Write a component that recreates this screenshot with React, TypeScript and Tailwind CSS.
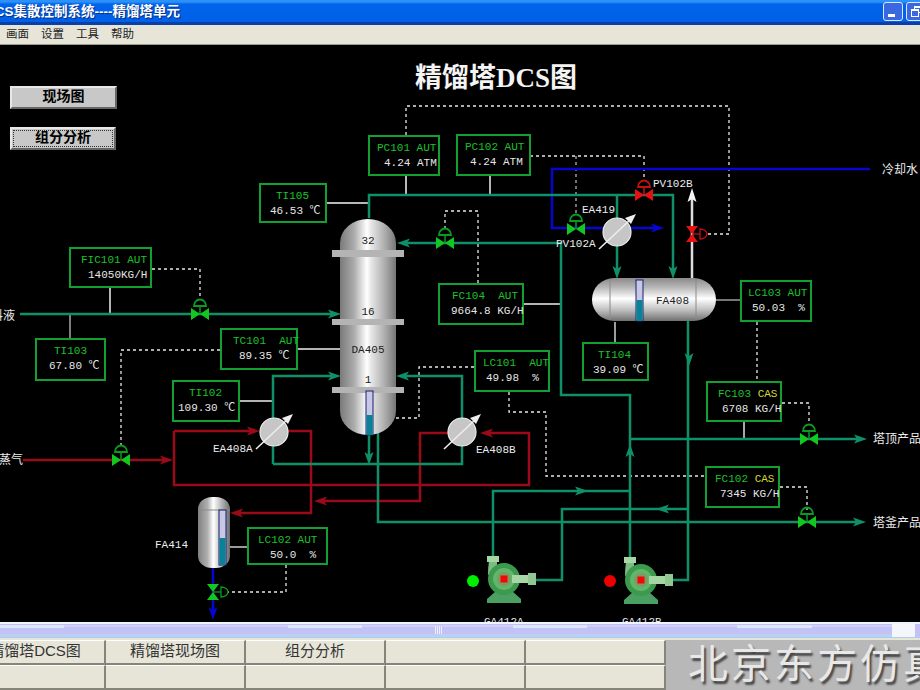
import React from "react";

const PIPE = "#0e9068";
const RED = "#9a0a18";
const BLUE = "#0606d0";

type P = [number, number];
const pts = (a: P[]) => a.map((p) => p.join(",")).join(" ");

function Line({ d, c = PIPE, w = 2.5, dash }: { d: string; c?: string; w?: number; dash?: string }) {
  return <polyline points={d} fill="none" stroke={c} strokeWidth={w} strokeDasharray={dash} />;
}

function Dash({ d, c = "#e8e8e8" }: { d: string; c?: string }) {
  return <polyline points={d} fill="none" stroke={c} strokeWidth={1.3} strokeDasharray="3 3" />;
}

function Arrow({ x, y, dir, c = PIPE, l = 13, h = 4.5 }: { x: number; y: number; dir: "r" | "l" | "u" | "d"; c?: string; l?: number; h?: number }) {
  const p: P[] =
    dir === "r"
      ? [[x, y], [x - l, y - h], [x - l + 3, y], [x - l, y + h]]
      : dir === "l"
        ? [[x, y], [x + l, y - h], [x + l - 3, y], [x + l, y + h]]
        : dir === "u"
          ? [[x, y], [x - h, y + l], [x, y + l - 3], [x + h, y + l]]
          : [[x, y], [x - h, y - l], [x, y - l + 3], [x + h, y - l]];
  return <polygon points={pts(p)} fill={c} />;
}

function Valve({ x, y, c = "#12c820", d = "#0a9a22" }: { x: number; y: number; c?: string; d?: string }) {
  return (
    <g>
      <polygon points={pts([[x - 9, y - 6], [x, y], [x - 9, y + 6]])} fill={c} />
      <polygon points={pts([[x + 9, y - 6], [x, y], [x + 9, y + 6]])} fill={c} />
      <line x1={x} y1={y} x2={x} y2={y - 8} stroke={d} strokeWidth={1.5} />
      <path d={`M${x - 6} ${y - 8} A6 6.5 0 0 1 ${x + 6} ${y - 8} Z`} fill="none" stroke={d} strokeWidth={1.8} />
    </g>
  );
}

function VValve({ x, y, c = "#12c820", d = "#0a9a22" }: { x: number; y: number; c?: string; d?: string }) {
  return (
    <g>
      <polygon points={pts([[x - 6, y - 8], [x + 6, y - 8], [x, y]])} fill={c} />
      <polygon points={pts([[x - 6, y + 8], [x + 6, y + 8], [x, y]])} fill={c} />
      <line x1={x} y1={y} x2={x + 8} y2={y} stroke={d} strokeWidth={1.3} />
      <path d={`M${x + 8} ${y - 5} A7 5 0 0 1 ${x + 8} ${y + 5} Z`} fill="none" stroke={d} strokeWidth={1.3} />
    </g>
  );
}

function Exchanger({ x, y }: { x: number; y: number }) {
  return (
    <g>
      <circle cx={x} cy={y} r={14} fill="#c6c6c6" stroke="#ececec" strokeWidth={1.2} />
      <line x1={x - 18} y1={y + 17} x2={x + 14} y2={y - 13} stroke="#eeeeee" strokeWidth={1.6} />
      <polygon points={pts([[x + 19, y - 18], [x + 8, y - 14], [x + 14, y - 8]])} fill="#eeeeee" />
    </g>
  );
}

function Pump({ x, y }: { x: number; y: number }) {
  return (
    <g transform={`translate(${x} ${y})`}>
      <polygon points={pts([[-8, 12], [8, 12], [17, 20], [17, 24], [-17, 24], [-17, 20]])} fill="#4a9f62" />
      <path d="M-16 -4 Q-16 -12 -15 -18 L-7 -18 L-7 -8 Z" fill="#7dbb82" />
      <circle r={16} fill="#3c9a4c" />
      <circle r={11} fill="#62b56c" />
      <circle r={7} fill="#7f9a5e" />
      <rect x={8} y={-4} width={18} height={8} fill="#a6d6a4" />
      <rect x={24} y={-6} width={8} height={12} fill="#8fc892" />
      <rect x={-17} y={-23} width={12} height={6} fill="#a6d6a4" />
      <rect x={-3.5} y={-3.5} width={7} height={7} fill="#f00808" />
    </g>
  );
}

function Label({ x, y, t, c = "#ececec", a = "start", big = false }: { x: number; y: number; t: string; c?: string; a?: "start" | "middle"; big?: boolean }) {
  return (
    <text x={x} y={y} fill={c} textAnchor={a} className={big ? "text-[12px]" : "text-[11px]"}>
      {t}
    </text>
  );
}

function Gauge({ x, y, w, h, level }: { x: number; y: number; w: number; h: number; level: number }) {
  return (
    <g>
      <rect x={x} y={y} width={w} height={h} fill="#c8c8e6" stroke="#14206e" strokeWidth={1} />
      <rect x={x + 0.5} y={level} width={w - 1} height={y + h - level} fill="#0a8296" />
    </g>
  );
}

const boxes = [
  { pos: "left-[368px] top-[90px] w-[72px] h-[41px]", a: "PC101 AUT", b: "4.24 ATM", pa: "pl-[7px]", pb: "pl-[14px]" },
  { pos: "left-[456px] top-[89px] w-[75px] h-[42px]", a: "PC102 AUT", b: "4.24 ATM", pa: "pl-[7px]", pb: "pl-[12px]" },
  { pos: "left-[259px] top-[138px] w-[68px] h-[40px]", a: "TI105", b: "46.53 ℃", pa: "pl-[15px]", pb: "pl-[9px]" },
  { pos: "left-[69px] top-[202px] w-[83px] h-[41px]", a: "FIC101 AUT", b: "14050KG/H", pa: "pl-[10px]", pb: "pl-[17px]" },
  { pos: "left-[35px] top-[293px] w-[71px] h-[43px]", a: "TI103", b: "67.80 ℃", pa: "pl-[17px]", pb: "pl-[12px]" },
  { pos: "left-[220px] top-[283px] w-[78px] h-[42px]", a: "TC101  AUT", b: "89.35 ℃", pa: "pl-[11px]", pb: "pl-[17px]" },
  { pos: "left-[172px] top-[335px] w-[68px] h-[42px]", a: "TI102", b: "109.30 ℃", pa: "pl-[15px]", pb: "pl-[4px]" },
  { pos: "left-[438px] top-[238px] w-[86px] h-[42px]", a: "FC104  AUT", b: "9664.8 KG/H", pa: "pl-[12px]", pb: "pl-[11px]" },
  { pos: "left-[474px] top-[305px] w-[76px] h-[42px]", a: "LC101  AUT", b: "49.98  %", pa: "pl-[7px]", pb: "pl-[10px]" },
  { pos: "left-[582px] top-[297px] w-[67px] h-[39px]", a: "TI104", b: "39.09 ℃", pa: "pl-[14px]", pb: "pl-[9px]" },
  { pos: "left-[740px] top-[235px] w-[72px] h-[42px]", a: "LC103 AUT", b: "50.03  %", pa: "pl-[6px]", pb: "pl-[10px]" },
  { pos: "left-[706px] top-[336px] w-[76px] h-[41px]", a: "FC103", y: "CAS", b: "6708 KG/H", pa: "pl-[10px]", pb: "pl-[14px]" },
  { pos: "left-[705px] top-[421px] w-[75px] h-[42px]", a: "FC102", y: "CAS", b: "7345 KG/H", pa: "pl-[8px]", pb: "pl-[13px]" },
  { pos: "left-[247px] top-[482px] w-[81px] h-[38px]", a: "LC102 AUT", b: "50.0  %", pa: "pl-[9px]", pb: "pl-[21px]" },
];

const tabs = ["精馏塔DCS图", "精馏塔现场图", "组分分析", "", ""];

function Cell({ t }: { t?: string }) {
  return (
    <div className="flex h-[25px] items-center justify-center border-t border-t-white border-r-2 border-r-[#85857a] border-b-2 border-b-[#85857a] bg-[#e6e5d8] pb-[2px] text-[15px] text-[#333333]">
      {t}
    </div>
  );
}

export default function App() {
  return (
    <div className="flex h-[690px] w-[920px] flex-col overflow-hidden bg-black font-['Liberation_Mono','Noto_Sans_CJK_SC',monospace]">
      {/* title bar */}
      <div className="flex h-[25px] shrink-0 items-start justify-between overflow-hidden border-b-[3px] border-b-[#0a3fa8] bg-[linear-gradient(#2c92f8_0,#2c92f8_2px,#0164ec_4px,#0060e6_100%)]">
        <span className="-ml-[15px] mt-[3px] whitespace-nowrap font-['Liberation_Sans','Noto_Sans_CJK_SC',sans-serif] text-[13.5px] font-bold leading-[18px] text-white [text-shadow:1px_1px_1px_#0a2a80]">
          DCS集散控制系统----精馏塔单元
        </span>
        <div className="-mr-[6px] mt-[2px] flex gap-[3px]">
          <div className="relative h-[19px] w-[20px] rounded-[3px] border border-[#dce8ff] bg-[#3a68e0]">
            <span className="absolute bottom-[3px] left-[4px] h-[3px] w-[7px] bg-white" />
          </div>
          <div className="relative h-[19px] w-[20px] rounded-[3px] border border-[#dce8ff] bg-[#3a68e0]">
            <span className="absolute left-[7px] top-[3px] h-[7px] w-[8px] border border-t-2 border-white" />
            <span className="absolute left-[4px] top-[6px] h-[8px] w-[8px] border border-t-2 border-white bg-[#3a68e0]" />
          </div>
        </div>
      </div>

      {/* menu */}
      <div className="flex h-[20px] shrink-0 items-center gap-[12px] border-b border-b-[#9c9b8e] bg-[#e6e5d8] pl-[6px] font-['Liberation_Sans','Noto_Sans_CJK_SC',sans-serif] text-[11.5px] text-[#222222]">
        <span>画面</span>
        <span>设置</span>
        <span>工具</span>
        <span>帮助</span>
      </div>

      {/* canvas */}
      <div className="relative flex-1 overflow-hidden bg-black">
        <svg width="920" height="577" viewBox="0 45 920 577" className="block">
          <defs>
            <linearGradient id="col" x1="0" x2="1" y1="0" y2="0">
              <stop offset="0" stopColor="#7a7a7a" />
              <stop offset="0.25" stopColor="#ababab" />
              <stop offset="0.48" stopColor="#ffffff" />
              <stop offset="0.55" stopColor="#e8e8e8" />
              <stop offset="0.8" stopColor="#adadad" />
              <stop offset="1" stopColor="#767676" />
            </linearGradient>
            <linearGradient id="drum" x1="0" x2="0" y1="0" y2="1">
              <stop offset="0" stopColor="#8a8a8a" />
              <stop offset="0.22" stopColor="#b8b8b8" />
              <stop offset="0.48" stopColor="#ffffff" />
              <stop offset="0.75" stopColor="#bdbdbd" />
              <stop offset="1" stopColor="#707070" />
            </linearGradient>
            <linearGradient id="small" x1="0" x2="1" y1="0" y2="0">
              <stop offset="0" stopColor="#808080" />
              <stop offset="0.3" stopColor="#b0b0b0" />
              <stop offset="0.48" stopColor="#ffffff" />
              <stop offset="0.7" stopColor="#c0c0c0" />
              <stop offset="1" stopColor="#6c6c6c" />
            </linearGradient>
          </defs>

          {/* signal lines */}
          <Dash d="406,135 406,106 729,106 729,234 707,234" />
          <Dash d="530,156 644,156 644,180" />
          <Dash d="576,156 576,215" c="#b0b0b0" />
          <Dash d="478,283 478,211 445,211 445,228" />
          <Dash d="152,269 200,269 200,298" />
          <Dash d="220,350 121,350 121,445" />
          <Dash d="474,367 419,367 419,418 375,418" />
          <Dash d="509,392 509,412 546,412 546,476 705,476" />
          <Dash d="757,322 757,381" />
          <Dash d="782,403 809,403 809,425" />
          <Dash d="780,487 807,487 807,510" />
          <Dash d="286,565 286,592 228,592" />

          {/* measurement lines */}
          <Line d="406,176 406,195" c="#b8b8b8" w={2} />
          <Line d="490,176 490,195" c="#f0f0f0" w={1.5} />
          <Line d="327,203 369,203" c="#b8b8b8" w={2} />
          <Line d="110,287 110,314" c="#f0f0f0" w={1.5} />
          <Line d="70,314 70,338" c="#a8a8a8" w={1.5} />
          <Line d="298,349 340,349" c="#f0f0f0" w={1.3} />
          <Line d="240,401 273,401" c="#f0f0f0" w={1.3} />
          <Line d="524,304 560,304" c="#f0f0f0" w={1.3} />
          <Line d="615,322 615,342" c="#f0f0f0" w={1.3} />
          <Line d="716,300 740,300" c="#b8b8b8" w={1.3} />
          <Line d="744,421 744,439" c="#a8a8a8" w={2} />
          <Line d="229,547 247,547" c="#f0f0f0" w={1.3} />

          {/* blue */}
          <Line d="870,169 552,169 552,228 655,228" c={BLUE} />
          <Arrow x={664} y={228} dir="r" c={BLUE} />
          <Line d="213,568 213,612" c={BLUE} />
          <Arrow x={213} y={620} dir="d" c={BLUE} />

          {/* red */}
          <Line d="23,460 165,460" c={RED} />
          <Arrow x={173} y={460} dir="r" c={RED} />
          <Line d="174,431 252,431" c={RED} />
          <Arrow x={260} y={431} dir="r" c={RED} />
          <Line d="174,431 174,485 529,485 529,433 488,433" c={RED} />
          <Arrow x={480} y={433} dir="l" c={RED} />
          <Line d="288,431 311,431 311,513 238,513" c={RED} />
          <Arrow x={230} y={513} dir="l" c={RED} />
          <Line d="448,433 420,433 420,501 322,501" c={RED} />
          <Arrow x={314} y={501} dir="l" c={RED} />

          {/* green pipes */}
          <Line d="369,218 369,195 673,195 673,270" />
          <Arrow x={673} y={279} dir="d" />
          <Line d="617,195 617,270" />
          <Arrow x={617} y={279} dir="d" />
          <Line d="405,243 561,243 561,395 630,395 630,557" />
          <Arrow x={397} y={243} dir="l" />
          <Arrow x={630} y={444} dir="u" />
          <Line d="688,320 688,580 672,580" />
          <Arrow x={689} y={366} dir="d" />
          <Line d="688,509 562,509 562,580 535,580" />
          <Arrow x={656} y={509} dir="l" />
          <Line d="493,557 493,491 630,491" />
          <Arrow x={588} y={491} dir="r" />
          <Line d="378,430 378,522 860,522" />
          <Arrow x={866} y={522} dir="r" />
          <Line d="630,439 860,439" />
          <Arrow x={867} y={439} dir="r" />
          <Line d="369,430 369,457" />
          <Arrow x={369} y={465} dir="d" />
          <Line d="273,464 462,464 462,376 405,376" />
          <Arrow x={396} y={376} dir="l" />
          <Line d="273,464 273,376 332,376" />
          <Arrow x={341} y={376} dir="r" />
          <Line d="20,314 332,314" />
          <Arrow x={341} y={314} dir="r" />

          {/* white outlet */}
          <Line d="692,278 692,198" c="#dcdcdc" />
          <Arrow x={692} y={188} dir="u" c="#f4f4f4" l={14} />

          {/* column */}
          <rect x={340} y={219} width={56} height={216} rx={28} ry={24} fill="url(#col)" />
          <rect x={332} y={250} width={72} height={7} fill="#b4b4b4" />
          <rect x={332} y={319} width={72} height={6} fill="#b4b4b4" />
          <rect x={332} y={387} width={72} height={6} fill="#b4b4b4" />
          <Gauge x={366} y={391} w={7} h={44} level={415} />
          <Label x={368} y={244} t="32" c="#222222" a="middle" />
          <Label x={368} y={315} t="16" c="#222222" a="middle" />
          <Label x={368} y={353} t="DA405" c="#222222" a="middle" />
          <Label x={368} y={383} t="1" c="#222222" a="middle" />

          {/* FA408 */}
          <rect x={592} y={278} width={124} height={43} rx={22} ry={21.5} fill="url(#drum)" />
          <line x1={610} y1={279} x2={610} y2={320} stroke="#8a8a8a" />
          <line x1={696} y1={279} x2={696} y2={320} stroke="#8a8a8a" />
          <Gauge x={636} y={280} w={7} h={41} level={300} />
          <Label x={656} y={304} t="FA408" c="#222222" />

          {/* FA414 */}
          <rect x={198} y={497} width={32} height={71} rx={14} ry={12} fill="url(#small)" />
          <line x1={198} y1={510} x2={230} y2={510} stroke="#8a8a8a" />
          <Gauge x={219} y={510} w={7} h={55} level={538} />

          <Exchanger x={617} y={232} />
          <Exchanger x={274} y={432} />
          <Exchanger x={462} y={432} />

          <Valve x={445} y={243} />
          <Valve x={200} y={314} />
          <Valve x={121} y={460} />
          <Valve x={809} y={439} />
          <Valve x={807} y={522} />
          <Valve x={576} y={229} />
          <Valve x={644} y={195} c="#e81010" d="#c01010" />
          <VValve x={692} y={234} c="#e81010" d="#c01010" />
          <VValve x={213} y={592} />

          <Pump x={504} y={579} />
          <Pump x={641} y={580} />
          <circle cx={473} cy={581} r={6} fill="#00ee00" />
          <circle cx={610} cy={581} r={6} fill="#ee0000" />

          {/* labels */}
          <text x={415} y={87} fill="#f4f4f4" className="font-['Liberation_Serif','Noto_Sans_CJK_SC',serif] text-[27px] font-bold">
            精馏塔DCS图
          </text>
          <Label x={155} y={548} t="FA414" />
          <Label x={213} y={452} t="EA408A" />
          <Label x={476} y={453} t="EA408B" />
          <Label x={556} y={247} t="PV102A" />
          <Label x={653} y={187} t="PV102B" />
          <Label x={582} y={213} t="EA419" />
          <Label x={484} y={625} t="GA412A" />
          <Label x={622} y={625} t="GA412B" />
          <Label x={-9} y={320} t="料液" big />
          <Label x={-1} y={464} t="蒸气" big />
          <Label x={882} y={174} t="冷却水" big />
          <Label x={873} y={443} t="塔顶产品" big />
          <Label x={873} y={527} t="塔釜产品" big />
        </svg>

        {/* field buttons */}
        <div className="absolute left-[10px] top-[41px] flex h-[23px] w-[107px] items-center justify-center border-2 border-t-[#e8e8e8] border-l-[#e8e8e8] border-r-[#666666] border-b-[#666666] bg-[#c8c8c8] text-[14px] font-bold text-black">
          现场图
        </div>
        <div className="absolute left-[10px] top-[82px] flex h-[23px] w-[106px] items-center justify-center border-2 border-t-[#e8e8e8] border-l-[#e8e8e8] border-r-[#666666] border-b-[#666666] bg-[#c8c8c8] p-[1px] text-[14px] font-bold text-black">
          <span className="flex h-full w-full items-center justify-center border border-dotted border-[#333333]">组分分析</span>
        </div>

        {/* controllers */}
        {boxes.map((b) => (
          <div key={b.a} className={`absolute border-2 border-[#12a030] bg-black pt-[4px] text-[11px] leading-[15px] ${b.pos}`}>
            <div className={`whitespace-pre text-[#1cc02c] ${b.pa}`}>
              {b.a}
              {b.y && <span className="text-[#d8d830]"> {b.y}</span>}
            </div>
            <div className={`whitespace-pre text-[#e6e6e6] ${b.pb}`}>{b.b}</div>
          </div>
        ))}
      </div>

      {/* scrollbar */}
      <div className="flex h-[16px] shrink-0 border-t-2 border-t-[#eef4ff] border-b border-b-[#a8d0f0] bg-[#c2c2f6]">
        <div className="relative flex-1">
          <span className="absolute left-0 right-0 top-[1px] h-[2px] bg-[#d0d0fa]" />
          <span className="absolute left-0 top-[1px] h-[3px] w-[64px] bg-[#dce6fd]" />
          <span className="absolute left-[288px] top-[1px] h-[3px] w-[74px] bg-[#dce6fd]" />
          <span className="absolute left-[513px] top-[1px] h-[3px] w-[74px] bg-[#dce6fd]" />
          <span className="absolute left-[737px] top-[1px] h-[3px] w-[75px] bg-[#dce6fd]" />
          <span className="absolute bottom-0 left-0 right-0 h-[3px] bg-[#bcd0f4]" />
          <span className="absolute left-[435px] top-[2px] h-[8px] w-[8px] bg-[repeating-linear-gradient(90deg,#eeeeff_0,#eeeeff_1px,#c2c2f6_1px,#c2c2f6_2px)]" />
        </div>
        <div className="w-[23px] bg-[#f4f6fc]" />
        <div className="w-[5px] bg-[#c2c2f6]" />
      </div>

      {/* bottom tabs */}
      <div className="h-[52px] shrink-0 overflow-hidden bg-[#e6e5d8] pt-[2px] font-['Liberation_Sans','Noto_Sans_CJK_SC',sans-serif]">
        <div className="-ml-[34px] grid w-[954px] grid-cols-[repeat(5,140px)_1fr] grid-rows-[25px_25px]">
          {tabs.map((t, i) => (
            <div key={i} className="row-start-1">
              <Cell t={t} />
            </div>
          ))}
          <div className="col-start-6 row-span-2 row-start-1 flex items-center overflow-hidden whitespace-nowrap bg-[#b8b8b8] pb-[8px] pl-[22px] font-['Noto_Sans_CJK_SC',sans-serif] text-[40px] leading-none tracking-[3px] text-[#e8e8e8] [text-shadow:2px_3px_2px_#444444]">
            北京东方仿真
          </div>
          {tabs.map((_, i) => (
            <div key={i} className="row-start-2">
              <Cell />
            </div>
          ))}
        </div>
      </div>
    </div>
  );
}
